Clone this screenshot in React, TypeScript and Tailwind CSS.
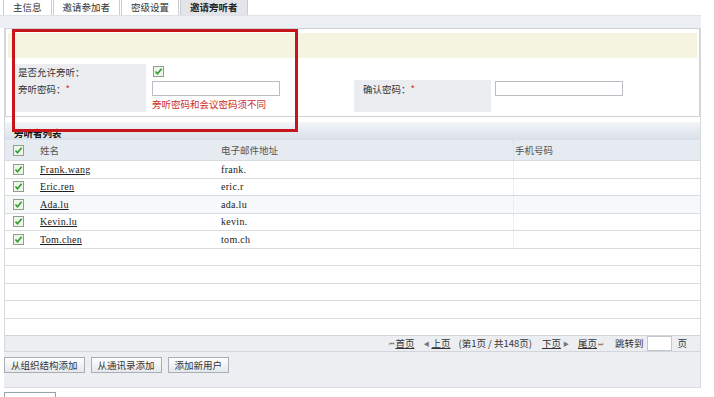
import React from 'react';

const font = { fontFamily: '"Noto Sans CJK SC", "Liberation Sans", sans-serif' };
const serif = { fontFamily: '"Liberation Serif", serif' };

const people = [
  { name: 'Frank.wang', email: 'frank.' },
  { name: 'Eric.ren', email: 'eric.r' },
  { name: 'Ada.lu', email: 'ada.lu' },
  { name: 'Kevin.lu', email: 'kevin.' },
  { name: 'Tom.chen', email: 'tom.ch' },
];

function Check() {
  return (
    <svg width="11" height="11" viewBox="0 0 11 11" className="block">
      <rect x="0.5" y="0.5" width="10" height="10" fill="#eef6ea" stroke="#8fa08a" />
      <path d="M2.5 5.5 L4.5 7.8 L8.6 2.8" fill="none" stroke="#2f9a2f" strokeWidth="1.6" />
    </svg>
  );
}

function Tab({ label, active }: { label: string; active?: boolean }) {
  return (
    <div
      className={`h-[15px] px-[9px] border-l border-r border-[#c9cdd2] text-[9.5px] leading-[14px] ${
        active ? 'bg-[#e3e5e8] font-bold text-[#222]' : 'bg-white text-[#333]'
      }`}
    >
      {label}
    </div>
  );
}

export default function App() {
  const emptyRows = Array.from({ length: 5 });

  return (
    <div className="relative w-[714px] h-[397px] bg-white overflow-hidden text-[9.5px] text-[#333]" style={font}>
      {/* Tabs */}
      <div className="flex gap-[1px] pl-[3px] h-[15px]">
        <Tab label="主信息" />
        <Tab label="邀请参加者" />
        <Tab label="密级设置" />
        <Tab label="邀请旁听者" active />
      </div>
      <div className="h-[13px] w-[701px] bg-[#eceff3] border-t border-[#dfe3e8]" />

      <div className="ml-[4px] w-[697px] border-l border-r border-[#d5d9de]">
        {/* Form panel */}
        <div className="h-[89px] border border-[#cfd3d8] bg-white pt-[4px] px-[2px]">
          <div className="h-[25px] bg-[#f4f4e0]" />
          <div className="mt-[6px] flex">
            <div className="ml-[7px] w-[131px] h-[16px] bg-[#ebedf1] pl-[3px] leading-[16px]">是否允许旁听：</div>
            <div className="ml-[7px] pt-[2px]">
              <Check />
            </div>
          </div>
          <div className="flex">
            <div className="ml-[7px] w-[131px] h-[32px] bg-[#ebedf1] pl-[3px] pt-[1px] leading-[16px]">
              旁听密码：<span className="text-[#d22]">*</span>
            </div>
            <div className="ml-[6px] w-[202px] pt-[1px]">
              <div className="w-[128px] h-[15px] border border-[#b9bec5] bg-white" />
              <div className="text-[#cc2a2a] leading-[16px]">旁听密码和会议密码须不同</div>
            </div>
            <div className="w-[137px] h-[32px] bg-[#ebedf1] pl-[9px] pt-[1px] leading-[16px]">
              确认密码：<span className="text-[#d22]">*</span>
            </div>
            <div className="ml-[4px] pt-[1px]">
              <div className="w-[128px] h-[15px] border border-[#b9bec5] bg-white" />
            </div>
          </div>
        </div>

        {/* Section header */}
        <div className="mt-[5px] h-[18px] bg-gradient-to-b from-[#f3f5f8] to-[#d9e0e9] pl-[9px] font-bold text-[#111] leading-[22px]">
          旁听者列表
        </div>

        {/* Table header */}
        <div className="flex items-center h-[20px] bg-[#e6ebf1] text-[#555]">
          <div className="w-[35px] pl-[8px]">
            <Check />
          </div>
          <div className="w-[181px]">姓名</div>
          <div className="w-[292px]">电子邮件地址</div>
          <div className="flex-1 border-l border-dotted border-[#d4d8dd] h-full pl-[1px] leading-[20px]">手机号码</div>
        </div>

        {people.map((p, i) => (
          <div key={p.name} className={`flex items-center h-[17.5px] border-t border-[#d9dcdf] ${i === 2 ? 'bg-[#f7f8f9]' : 'bg-white'}`}>
            <div className="w-[35px] pl-[8px]">
              <Check />
            </div>
            <div className="w-[181px] text-[10px] text-[#222] tracking-[0.3px]" style={serif}>
              <span className="underline">{p.name}</span>
            </div>
            <div className="w-[292px] text-[10px] text-[#222] tracking-[0.3px]" style={serif}>
              {p.email}
            </div>
            <div className="flex-1 h-full border-l border-dotted border-[#e2e5e8]" />
          </div>
        ))}
        {emptyRows.map((_, i) => (
          <div key={i} className="h-[17.5px] border-t border-[#d9dcdf] bg-white" />
        ))}

        {/* Pagination */}
        <div className="flex items-center justify-end h-[17px] bg-[#eceef2] border-t border-b border-[#d2d6db] pr-[13px] text-[#333]">
          <span className="text-[6px] text-[#777] mr-[1px]">⏮</span>
          <span className="underline">首页</span>
          <span className="text-[6px] text-[#777] ml-[9px] mr-[2px]">◀</span>
          <span className="underline">上页</span>
          <span className="ml-[8px]">(第1页 / 共148页)</span>
          <span className="underline ml-[10px]">下页</span>
          <span className="text-[6px] text-[#777] ml-[2px]">▶</span>
          <span className="underline ml-[9px]">尾页</span>
          <span className="text-[6px] text-[#777] ml-[1px]">⏭</span>
          <span className="ml-[12px]">跳转到</span>
          <div className="ml-[4px] w-[25px] h-[15px] border border-[#c3c8ce] bg-white" />
          <span className="ml-[5px]">页</span>
        </div>

        {/* Buttons */}
        <div className="h-[36px] bg-[#eceef2] border-b border-[#d8dbdf] flex items-start pt-[5px] gap-[6px] -ml-[1px]">
          {['从组织结构添加', '从通讯录添加', '添加新用户'].map(t => (
            <button
              key={t}
              className="h-[16px] px-[6px] border border-[#a9aeb5] bg-gradient-to-b from-white to-[#e4e7eb] text-[9.5px] leading-[14px] text-[#333]"
            >
              {t}
            </button>
          ))}
        </div>
      </div>

      <div className="ml-[4px] mt-[4px] w-[52px] h-[10px] border border-[#9aa0a7] bg-white" />

      {/* Annotation box */}
      <div className="absolute left-[12px] top-[29px] w-[286px] h-[103px] border-[3px] border-[#c8141b]" />
    </div>
  );
}
